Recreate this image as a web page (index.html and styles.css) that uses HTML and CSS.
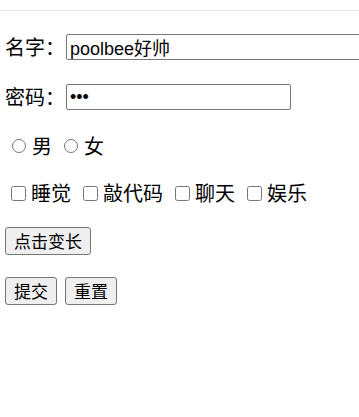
FILE: index.html
```html
<!DOCTYPE html>
<html lang="zh-CN">
<head>
<meta charset="utf-8">
<title>表单</title>
<link rel="stylesheet" href="styles.css">
</head>
<body>
<div class="topbar"></div>
<form class="form">
  <div class="row row-name">
    <label class="lbl" for="name">名字：</label>
    <span class="field-clip"><input id="name" class="field field-long" type="text" value="poolbee好帅"></span>
  </div>
  <div class="row row-pwd">
    <label class="lbl" for="pwd">密码：</label>
    <input id="pwd" class="field field-short" type="password" value="123">
  </div>
  <div class="row row-radio">
    <label class="opt opt-first-radio"><input class="radio" type="radio" name="sex">男</label>
    <label class="opt"><input class="radio" type="radio" name="sex">女</label>
  </div>
  <div class="row row-check">
    <label class="opt opt-first-check"><input class="check" type="checkbox">睡觉</label>
    <label class="opt"><input class="check" type="checkbox">敲代码</label>
    <label class="opt"><input class="check" type="checkbox">聊天</label>
    <label class="opt"><input class="check" type="checkbox">娱乐</label>
  </div>
  <div class="row row-btn">
    <button class="btn" type="button">点击变长</button>
  </div>
  <div class="row row-btns">
    <button class="btn" type="submit">提交</button>
    <button class="btn btn-next" type="reset">重置</button>
  </div>
</form>
</body>
</html>
```
FILE: styles.css
```css
html, body {
  overflow-x: hidden;
}
body {
  margin: 0;
  background: #fff;
  color: #000;
  font-family: "Noto Sans CJK SC", sans-serif;
  font-size: 20px;
}
.topbar {
  height: 10px;
  border-bottom: 1px solid #e8e8e8;
}
.form {
  display: flex;
  flex-direction: column;
  padding-left: 5px;
}
.row {
  display: flex;
  align-items: center;
  height: 26px;
  line-height: 26px;
  white-space: nowrap;
}
.row-name { margin-top: 23px; }
.row-pwd { margin-top: 24px; }
.row-radio { margin-top: 23px; }
.row-check { margin-top: 21px; }
.row-btn { margin-top: 21px; height: 28px; }
.row-btns { margin-top: 22px; height: 28px; }

.lbl {
  width: 61px;
  flex-shrink: 0;
}
.field-clip {
  display: flex;
  flex: 1;
  min-width: 0;
  overflow: hidden;
}
.field {
  box-sizing: border-box;
  height: 26px;
  margin: 0;
  padding: 1px 3px;
  border: 1px solid #767676;
  border-radius: 2px;
  background: #fff;
  color: #000;
  font-family: "Liberation Sans", "Noto Sans CJK SC", sans-serif;
  font-size: 18px;
  flex-shrink: 0;
}
.field-long { width: 330px; }
.field-short { width: 225px; }

.opt {
  display: flex;
  align-items: center;
  margin-right: 12px;
}
.radio {
  width: 14px;
  height: 14px;
  margin: 0 6px 0 0;
}
.opt-first-radio { margin-left: 7px; }
.check {
  width: 15px;
  height: 15px;
  margin: 0 5px 0 0;
}
.opt-first-check { margin-left: 6px; }

.btn {
  box-sizing: border-box;
  height: 28px;
  margin: 0;
  padding: 0 8px;
  border: 1px solid #767676;
  border-radius: 3px;
  background: #efefef;
  color: #000;
  font-family: "Noto Sans CJK SC", sans-serif;
  font-size: 17px;
  line-height: 26px;
}
.btn-next { margin-left: 8px; }
```
